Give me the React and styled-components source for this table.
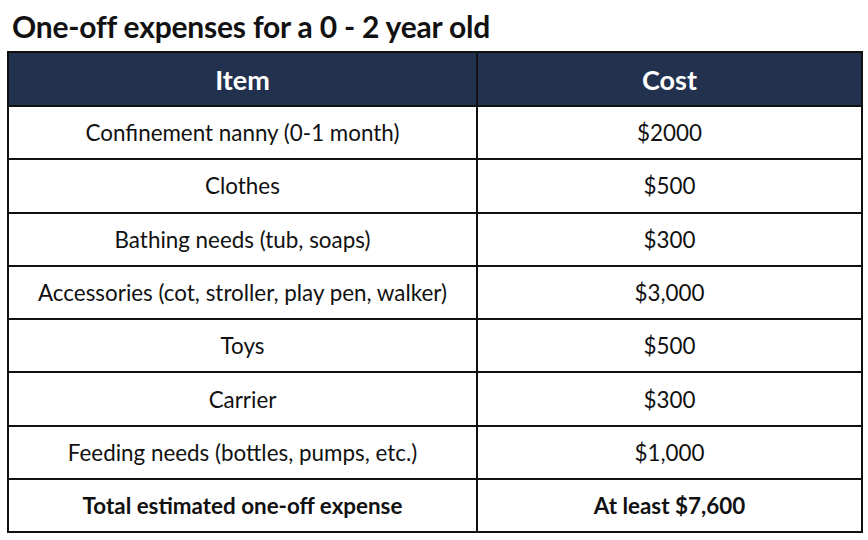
import React from "react";
import styled, { createGlobalStyle } from "styled-components";

const Global = createGlobalStyle`
  html, body { margin: 0; padding: 0; background: #fff; }
  body { font-family: Lato, "Open Sans", sans-serif; color: #111; }
`;

const Page = styled.div`
  width: 868px;
  height: 540px;
  padding: 9px 0 0 7px;
  box-sizing: border-box;
`;

const Title = styled.h1`
  margin: 0 0 0 5px;
  font-size: 30px;
  font-weight: 700;
  line-height: 34px;
  height: 42px;
  color: #111;
  letter-spacing: -0.2px;
`;

const Table = styled.table`
  width: 856px;
  border-collapse: collapse;
  table-layout: fixed;
  border: 2px solid #111;
`;

const HeadCell = styled.th`
  background: #22324e;
  color: #fff;
  font-size: 27px;
  font-weight: 700;
  height: 52px;
  padding: 0;
  border: 2px solid #111;
  text-align: center;
`;

const Cell = styled.td`
  font-size: 22.4px;
  font-weight: ${(p) => (p.$bold ? 700 : 400)};
  height: 51.3px;
  padding: 0;
  border: 2px solid #111;
  text-align: center;
  color: #111;
`;

const rows = [
  ["Confinement nanny (0-1 month)", "$2000"],
  ["Clothes", "$500"],
  ["Bathing needs (tub, soaps)", "$300"],
  ["Accessories (cot, stroller, play pen, walker)", "$3,000"],
  ["Toys", "$500"],
  ["Carrier", "$300"],
  ["Feeding needs (bottles, pumps, etc.)", "$1,000"],
];

export default function App() {
  return (
    <Page>
      <Global />
      <Title>One-off expenses for a 0 - 2 year old</Title>
      <Table>
        <colgroup>
          <col style={{ width: "469px" }} />
          <col />
        </colgroup>
        <thead>
          <tr>
            <HeadCell>Item</HeadCell>
            <HeadCell>Cost</HeadCell>
          </tr>
        </thead>
        <tbody>
          {rows.map(([item, cost]) => (
            <tr key={item}>
              <Cell>{item}</Cell>
              <Cell>{cost}</Cell>
            </tr>
          ))}
          <tr>
            <Cell $bold>Total estimated one-off expense</Cell>
            <Cell $bold>At least $7,600</Cell>
          </tr>
        </tbody>
      </Table>
    </Page>
  );
}
